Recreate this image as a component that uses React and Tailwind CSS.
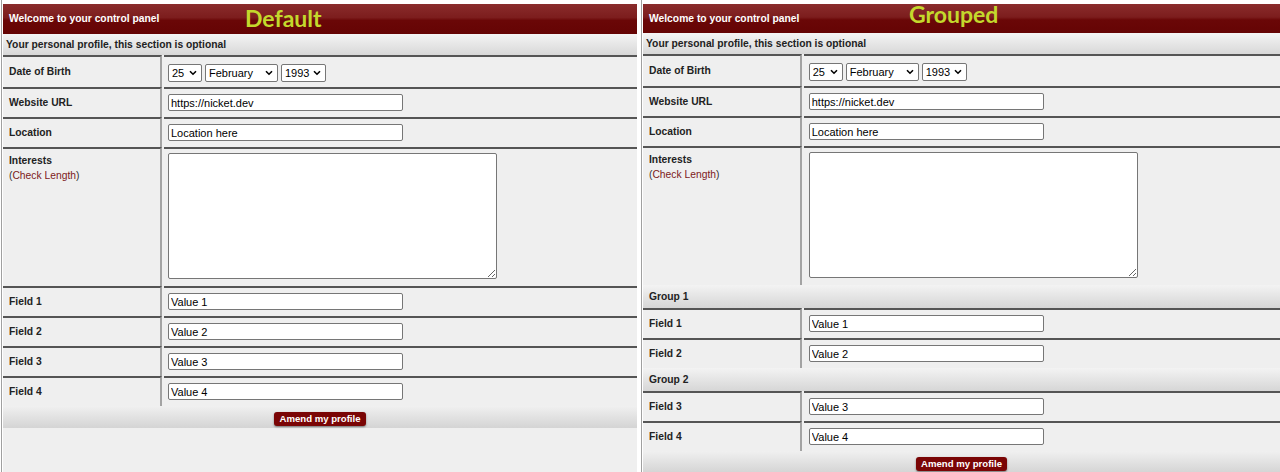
import React from "react";

function Chevron() {
  return (
    <svg width="8" height="6" viewBox="0 0 8 6" className="shrink-0">
      <path d="M1 1.2 L4 4.2 L7 1.2" fill="none" stroke="#000" strokeWidth="1.6" />
    </svg>
  );
}

function Sel({ value, options, w }) {
  return (
    <div className={`flex items-center h-[18px] border border-[#767676] rounded-[2px] bg-white pl-[3px] pr-[4px] ${w}`}>
      <select
        defaultValue={value}
        className="appearance-none bg-transparent flex-1 min-w-0 text-[11px] leading-none text-black outline-none"
      >
        {options.map((o) => (
          <option key={o}>{o}</option>
        ))}
      </select>
      <Chevron />
    </div>
  );
}

function TextInput({ value }) {
  return (
    <input
      defaultValue={value}
      className="w-[235px] h-[17px] border border-[#767676] rounded-[2px] bg-white px-[2px] text-[11px] text-black outline-none"
    />
  );
}

function Row({ label, children, h = "h-[30px]", pad = "pt-[5px] pb-[6px]", top = false }) {
  return (
    <div className={`flex gap-[2px] shrink-0 ${h}`}>
      <div
        className={`w-1/4 shrink-0 border-t-2 border-t-[#555] border-r-2 border-r-[#a3a3a3] pl-[6px] text-[10.3px] font-bold text-[#222] leading-[15px] flex ${
          top ? "items-start pt-[4px]" : "items-center pb-[2px]"
        }`}
      >
        {label}
      </div>
      <div className={`flex-1 border-t-2 border-t-[#555] pl-[4.5px] flex items-start ${pad}`}>{children}</div>
    </div>
  );
}

function GroupHeader({ label }) {
  return (
    <div className="h-[23px] shrink-0 flex items-center pl-[6px] text-[10.3px] font-bold text-[#222] bg-[linear-gradient(to_bottom,#f3f3f3,#d6d6d6)]">
      {label}
    </div>
  );
}

function Panel({ tag, tagPos, grouped, headerH }) {
  const fields = (n) => (
    <Row label={`Field ${n}`}>
      <TextInput value={`Value ${n}`} />
    </Row>
  );
  return (
    <div className="flex-1 flex flex-col bg-[#efefef] min-w-0">
      <div
        className={`relative shrink-0 ${headerH} flex items-center pl-[6px] text-white font-bold text-[10.3px] bg-[linear-gradient(to_bottom,#8a2c2c_0%,#7c1d1d_45%,#6a0707_55%,#650404_100%)]`}
      >
        Welcome to your control panel
        <span
          className={`absolute ${tagPos} font-['Lato',sans-serif] font-bold text-[23px] leading-none text-[#c4d82c]`}
        >
          {tag}
        </span>
      </div>
      <div className="h-[21px] shrink-0 flex items-center pl-[3px] text-[10.3px] font-bold text-[#222] bg-[linear-gradient(to_bottom,#f4f4f4,#d8d8d8)]">
        Your personal profile, this section is optional
      </div>
      <Row label="Date of Birth" h="h-[32px]" pad="pt-[7px] pb-[5px]">
        <div className="flex gap-[3px]">
          <Sel value="25" options={["24", "25", "26"]} w="w-[34px]" />
          <Sel value="February" options={["January", "February", "March"]} w="w-[73px]" />
          <Sel value="1993" options={["1992", "1993", "1994"]} w="w-[45px]" />
        </div>
      </Row>
      <Row label="Website URL">
        <TextInput value="https://nicket.dev" />
      </Row>
      <Row label="Location">
        <TextInput value="Location here" />
      </Row>
      <Row
        label={
          <div className="flex flex-col">
            <span>Interests</span>
            <span className="font-normal text-[#333]">
              (<span className="text-[#7d1a1a]">Check Length</span>)
            </span>
          </div>
        }
        h="h-[139px]"
        pad="pt-[4px] pb-[7px]"
        top
      >
        <textarea className="w-[329px] h-[126px] border border-[#767676] rounded-[2px] bg-white outline-none text-[11px]" />
      </Row>
      {grouped ? (
        <>
          <GroupHeader label="Group 1" />
          {fields(1)}
          {fields(2)}
          <GroupHeader label="Group 2" />
          {fields(3)}
          {fields(4)}
        </>
      ) : (
        <>
          {fields(1)}
          {fields(2)}
          {fields(3)}
          {fields(4)}
        </>
      )}
      <div className="h-[22px] shrink-0 flex justify-center items-start pt-[6px] bg-[linear-gradient(to_bottom,#f0f0f0,#d4d4d4)]">
        <button className="h-[14px] px-[5px] rounded-[3px] bg-[#7a0505] text-white font-bold text-[9.6px] leading-none shadow-[0_1px_2px_rgba(0,0,0,0.45)]">
          Amend my profile
        </button>
      </div>
    </div>
  );
}

export default function App() {
  return (
    <div className="flex w-[1280px] h-[472px] bg-white overflow-hidden font-['Liberation_Sans',Arial,sans-serif]">
      <div className="w-[636px] shrink-0 flex pt-[4px] ml-px mr-[3px] border-l border-l-[#a0a0a0] pl-px">
        <Panel tag="Default" tagPos="left-[242px] top-[2.5px]" headerH="h-[30px]" />
      </div>
      <div className="flex-1 min-w-0 flex pt-[4px] ml-px border-l border-l-[#a0a0a0] pl-px">
        <Panel tag="Grouped" tagPos="left-[266px] top-[-1px]" headerH="h-[29px]" grouped />
      </div>
    </div>
  );
}
